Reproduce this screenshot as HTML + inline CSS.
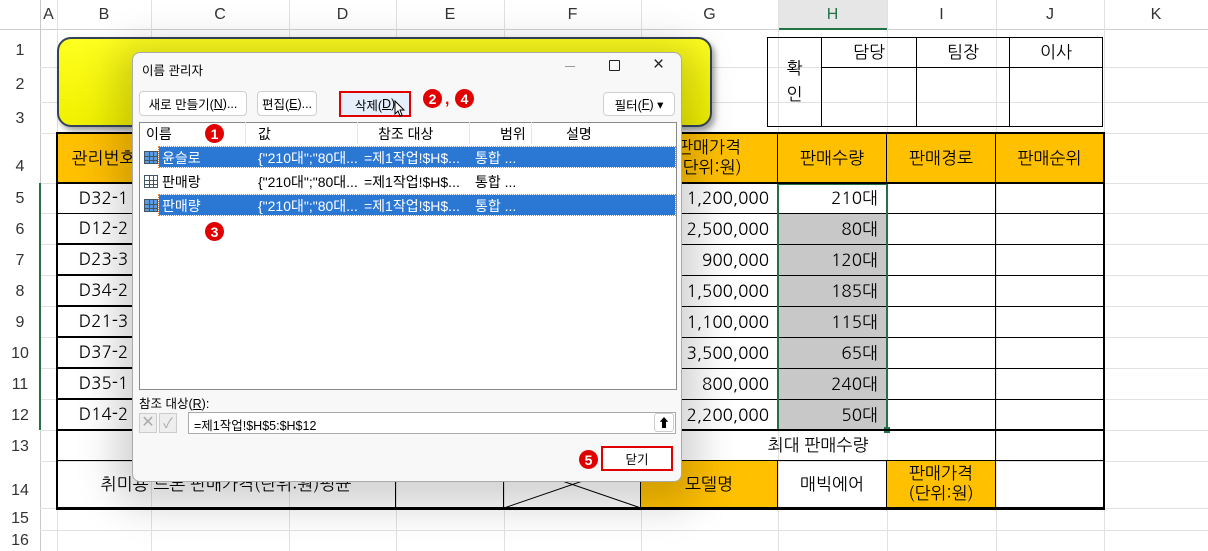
<!DOCTYPE html>
<html><head><meta charset="utf-8"><style>
*{margin:0;padding:0;box-sizing:border-box}
body{width:1208px;height:551px;overflow:hidden;background:#fff;position:relative;font-family:"Liberation Sans","Noto Sans CJK KR","NanumGothic",sans-serif;color:#000}
.a{position:absolute}
.hd{position:absolute;background:#fff;color:#333;font-size:16px;text-align:center}
.gl{position:absolute;background:#e1e1e1}
.c{position:absolute;display:flex;align-items:center;justify-content:center;font-size:17px;font-family:"NanumGothic","Noto Sans CJK KR",sans-serif;border:1px solid #000;margin:-1px 0 0 -1px}
.o{background:#FFC000}
.r{justify-content:flex-end;padding-right:8px}
.dl{font-size:12.5px;color:#000}
.btn{position:absolute;border:1px solid #d0d0d0;border-radius:4px;background:#fff;font-size:12.5px;display:flex;align-items:center;justify-content:center}
.red{position:absolute;width:19px;height:19px;border-radius:50%;background:#e00000;color:#fff;font-weight:bold;font-size:14px;display:flex;align-items:center;justify-content:center}
.sel{background:#2b78d4;color:#fff;outline:1px dotted #e08030}
.ico{position:absolute;width:14px;height:13px;border:1px solid #456;background:linear-gradient(#456 0 0) 0 4px/100% 1px no-repeat,linear-gradient(#456 0 0) 0 8px/100% 1px no-repeat,linear-gradient(90deg,#456 0 0) 4px 0/1px 100% no-repeat,linear-gradient(90deg,#456 0 0) 8px 0/1px 100% no-repeat,#fff}
.ico.b{background-color:#5a9be0}
</style></head><body>
<div class="a" style="left:0;top:0;width:1208px;height:30px;background:#fff;border-bottom:1px solid #d0d0d0"></div>
<div class="a" style="left:778px;top:0;width:109px;height:30px;background:#e6e6e6;border-bottom:2px solid #217346"></div>
<div class="hd" style="left:40px;top:6px;width:17px">A</div>
<div class="hd" style="left:57px;top:6px;width:94px">B</div>
<div class="hd" style="left:151px;top:6px;width:138px">C</div>
<div class="hd" style="left:289px;top:6px;width:107px">D</div>
<div class="hd" style="left:396px;top:6px;width:108px">E</div>
<div class="hd" style="left:504px;top:6px;width:137px">F</div>
<div class="hd" style="left:641px;top:6px;width:137px">G</div>
<div class="a" style="left:778px;top:6px;width:109px;text-align:center;font-size:16px;color:#217346">H</div>
<div class="hd" style="left:887px;top:6px;width:109px">I</div>
<div class="hd" style="left:996px;top:6px;width:108px">J</div>
<div class="hd" style="left:1104px;top:6px;width:104px">K</div>
<div class="gl" style="left:40px;top:0;width:1px;height:551px;background:#c8c8c8"></div>
<div class="gl" style="left:57px;top:0;width:1px;height:551px"></div>
<div class="gl" style="left:151px;top:0;width:1px;height:551px"></div>
<div class="gl" style="left:289px;top:0;width:1px;height:551px"></div>
<div class="gl" style="left:396px;top:0;width:1px;height:551px"></div>
<div class="gl" style="left:504px;top:0;width:1px;height:551px"></div>
<div class="gl" style="left:641px;top:0;width:1px;height:551px"></div>
<div class="gl" style="left:778px;top:0;width:1px;height:551px"></div>
<div class="gl" style="left:887px;top:0;width:1px;height:551px"></div>
<div class="gl" style="left:996px;top:0;width:1px;height:551px"></div>
<div class="gl" style="left:1104px;top:0;width:1px;height:551px"></div>
<div class="gl" style="left:0;top:67px;width:1208px;height:1px"></div>
<div class="gl" style="left:0;top:102px;width:1208px;height:1px"></div>
<div class="gl" style="left:0;top:133px;width:1208px;height:1px"></div>
<div class="gl" style="left:0;top:183px;width:1208px;height:1px"></div>
<div class="gl" style="left:0;top:213px;width:1208px;height:1px"></div>
<div class="gl" style="left:0;top:244px;width:1208px;height:1px"></div>
<div class="gl" style="left:0;top:275px;width:1208px;height:1px"></div>
<div class="gl" style="left:0;top:306px;width:1208px;height:1px"></div>
<div class="gl" style="left:0;top:337px;width:1208px;height:1px"></div>
<div class="gl" style="left:0;top:368px;width:1208px;height:1px"></div>
<div class="gl" style="left:0;top:399px;width:1208px;height:1px"></div>
<div class="gl" style="left:0;top:430px;width:1208px;height:1px"></div>
<div class="gl" style="left:0;top:461px;width:1208px;height:1px"></div>
<div class="gl" style="left:0;top:508px;width:1208px;height:1px"></div>
<div class="gl" style="left:0;top:530px;width:1208px;height:1px"></div>
<div class="a" style="left:0;top:30px;width:40px;height:521px;background:#fff;font-size:16px;color:#333;text-align:center">
<div class="a" style="left:0;top:12px;width:40px">1</div>
<div class="a" style="left:0;top:46px;width:40px">2</div>
<div class="a" style="left:0;top:80px;width:40px">3</div>
<div class="a" style="left:0;top:128px;width:40px">4</div>
<div class="a" style="left:0;top:160px;width:40px">5</div>
<div class="a" style="left:0;top:191px;width:40px">6</div>
<div class="a" style="left:0;top:222px;width:40px">7</div>
<div class="a" style="left:0;top:253px;width:40px">8</div>
<div class="a" style="left:0;top:284px;width:40px">9</div>
<div class="a" style="left:0;top:315px;width:40px">10</div>
<div class="a" style="left:0;top:346px;width:40px">11</div>
<div class="a" style="left:0;top:377px;width:40px">12</div>
<div class="a" style="left:0;top:408px;width:40px">13</div>
<div class="a" style="left:0;top:452px;width:40px">14</div>
<div class="a" style="left:0;top:480px;width:40px">15</div>
<div class="a" style="left:0;top:502px;width:40px">16</div>
</div>
<div class="a" style="left:39px;top:183px;width:2px;height:247px;background:#217346"></div>

<div class="a" style="left:57px;top:37px;width:655px;height:90px;background:linear-gradient(#ffff20,#f0f000);border:2px solid #33445a;border-radius:14px;box-shadow:3px 4px 6px rgba(0,0,0,.35)"></div>

<div class="c" style="left:768px;top:38px;width:55px;height:90px;flex-direction:column;line-height:26px">확<br>인</div>
<div class="c" style="left:822px;top:38px;width:96px;height:31px">담당</div>
<div class="c" style="left:917px;top:38px;width:94px;height:31px">팀장</div>
<div class="c" style="left:1010px;top:38px;width:94px;height:31px">이사</div>
<div class="c" style="left:822px;top:68px;width:96px;height:60px"></div>
<div class="c" style="left:917px;top:68px;width:94px;height:60px"></div>
<div class="c" style="left:1010px;top:68px;width:94px;height:60px"></div>

<div class="c o" style="left:57px;top:134px;width:95px;height:50px">관리번호</div>
<div class="c o" style="left:641px;top:134px;width:138px;height:50px;line-height:20px;text-align:center">판매가격<br>(단위:원)</div>
<div class="c o" style="left:778px;top:134px;width:110px;height:50px">판매수량</div>
<div class="c o" style="left:887px;top:134px;width:110px;height:50px">판매경로</div>
<div class="c o" style="left:996px;top:134px;width:109px;height:50px">판매순위</div>

<div class="c" style="left:57px;top:184px;width:95px;height:31px">D32-1</div>
<div class="c" style="left:57px;top:214px;width:95px;height:31px">D12-2</div>
<div class="c" style="left:57px;top:245px;width:95px;height:31px">D23-3</div>
<div class="c" style="left:57px;top:276px;width:95px;height:31px">D34-2</div>
<div class="c" style="left:57px;top:307px;width:95px;height:31px">D21-3</div>
<div class="c" style="left:57px;top:338px;width:95px;height:31px">D37-2</div>
<div class="c" style="left:57px;top:369px;width:95px;height:31px">D35-1</div>
<div class="c" style="left:57px;top:400px;width:95px;height:31px">D14-2</div>

<div class="c r" style="left:641px;top:184px;width:138px;height:31px">1,200,000</div>
<div class="c r" style="left:641px;top:214px;width:138px;height:32px">2,500,000</div>
<div class="c r" style="left:641px;top:245px;width:138px;height:32px">900,000</div>
<div class="c r" style="left:641px;top:276px;width:138px;height:32px">1,500,000</div>
<div class="c r" style="left:641px;top:307px;width:138px;height:32px">1,100,000</div>
<div class="c r" style="left:641px;top:338px;width:138px;height:32px">3,500,000</div>
<div class="c r" style="left:641px;top:369px;width:138px;height:32px">800,000</div>
<div class="c r" style="left:641px;top:400px;width:138px;height:32px">2,200,000</div>

<div class="c r" style="left:778px;top:184px;width:110px;height:31px">210대</div>
<div class="c r" style="left:778px;top:214px;width:110px;height:32px;background:#c8c8c8">80대</div>
<div class="c r" style="left:778px;top:245px;width:110px;height:32px;background:#c8c8c8">120대</div>
<div class="c r" style="left:778px;top:276px;width:110px;height:32px;background:#c8c8c8">185대</div>
<div class="c r" style="left:778px;top:307px;width:110px;height:32px;background:#c8c8c8">115대</div>
<div class="c r" style="left:778px;top:338px;width:110px;height:32px;background:#c8c8c8">65대</div>
<div class="c r" style="left:778px;top:369px;width:110px;height:32px;background:#c8c8c8">240대</div>
<div class="c r" style="left:778px;top:400px;width:110px;height:32px;background:#c8c8c8">50대</div>

<div class="c" style="left:887px;top:184px;width:110px;height:31px"></div>
<div class="c" style="left:887px;top:214px;width:110px;height:32px"></div>
<div class="c" style="left:887px;top:245px;width:110px;height:32px"></div>
<div class="c" style="left:887px;top:276px;width:110px;height:32px"></div>
<div class="c" style="left:887px;top:307px;width:110px;height:32px"></div>
<div class="c" style="left:887px;top:338px;width:110px;height:32px"></div>
<div class="c" style="left:887px;top:369px;width:110px;height:32px"></div>
<div class="c" style="left:887px;top:400px;width:110px;height:32px"></div>
<div class="c" style="left:996px;top:184px;width:109px;height:31px"></div>
<div class="c" style="left:996px;top:214px;width:109px;height:32px"></div>
<div class="c" style="left:996px;top:245px;width:109px;height:32px"></div>
<div class="c" style="left:996px;top:276px;width:109px;height:32px"></div>
<div class="c" style="left:996px;top:307px;width:109px;height:32px"></div>
<div class="c" style="left:996px;top:338px;width:109px;height:32px"></div>
<div class="c" style="left:996px;top:369px;width:109px;height:32px"></div>
<div class="c" style="left:996px;top:400px;width:109px;height:32px"></div>
<div class="a" style="left:777px;top:183px;width:111px;height:248px;border:2px solid #217346"></div>
<div class="a" style="left:884px;top:427px;width:6px;height:6px;background:#217346"></div>

<div class="c" style="left:57px;top:431px;width:585px;height:31px"></div>
<div class="c" style="left:641px;top:431px;width:356px;height:31px">최대 판매수량</div>
<div class="c" style="left:996px;top:431px;width:109px;height:31px"></div>
<div class="c" style="left:57px;top:461px;width:340px;height:48px">취미용 드론 판매가격(단위:원)평균</div>
<div class="c" style="left:396px;top:461px;width:109px;height:48px"></div>
<div class="c" style="left:504px;top:461px;width:138px;height:48px"><svg width="137" height="47" style="position:absolute;left:0;top:0"><line x1="0" y1="47" x2="137" y2="0" stroke="#000"/><line x1="0" y1="0" x2="137" y2="47" stroke="#000"/></svg></div>
<div class="c o" style="left:641px;top:461px;width:138px;height:48px">모델명</div>
<div class="c" style="left:778px;top:461px;width:110px;height:48px">매빅에어</div>
<div class="c o" style="left:887px;top:461px;width:110px;height:48px;line-height:20px;text-align:center">판매가격<br>(단위:원)</div>
<div class="c" style="left:996px;top:461px;width:109px;height:48px"></div>
<div class="a" style="left:56px;top:132px;width:1049px;height:378px;border:2px solid #000"></div>
<div class="a" style="left:56px;top:182px;width:1049px;height:2px;background:#000"></div>
<div class="a" style="left:56px;top:429px;width:1049px;height:2px;background:#000"></div>

<div class="a" style="left:132px;top:52px;width:550px;height:430px;background:#f8f8f8;border:1px solid #aaa;border-radius:8px;box-shadow:0 8px 40px 16px rgba(0,0,0,.18)">
<div class="a dl" style="left:9px;top:7px">이름 관리자</div>
<div class="a" style="left:432px;top:13px;width:10px;height:1px;background:#999"></div>
<div class="a" style="left:476px;top:7px;width:11px;height:11px;border:1.5px solid #222;border-radius:1px"></div>
<div class="a" style="left:520px;top:1px;font-size:19px;color:#222">×</div>
<div class="btn" style="left:6px;top:38px;width:108px;height:25px">새로 만들기(<u>N</u>)...</div>
<div class="btn" style="left:124px;top:38px;width:60px;height:25px">편집(<u>E</u>)...</div>
<div class="btn" style="left:206px;top:38px;width:72px;height:26px;background:#e5effb;border:2px solid #e00000;border-radius:0">삭제(<u>D</u>)</div>
<svg class="a" style="left:261px;top:47px" width="12" height="18"><path d="M1 1 L1 14 L4 11 L6 16 L8 15 L6 10 L10 10 Z" fill="#fff" stroke="#000" stroke-width="1"/></svg>
<div class="red" style="left:290px;top:36px">2</div>
<div class="a" style="left:312px;top:38px;font-size:16px;font-weight:bold;color:#e00000">,</div>
<div class="red" style="left:322px;top:36px">4</div>
<div class="btn" style="left:470px;top:39px;width:72px;height:24px">필터(<u>F</u>) ▾</div>
<div class="a" style="left:6px;top:69px;width:538px;height:268px;background:#fff;border:1px solid #8a8a8a"></div>
</div>
<div class="a dl" style="left:146px;top:124px;font-size:14px">이름</div>
<div class="a dl" style="left:258px;top:124px;font-size:14px">값</div>
<div class="a dl" style="left:378px;top:124px;font-size:14px">참조 대상</div>
<div class="a dl" style="left:500px;top:124px;font-size:14px">범위</div>
<div class="a dl" style="left:566px;top:124px;font-size:14px">설명</div>
<div class="a" style="left:245px;top:122px;width:1px;height:22px;background:#e5e5e5"></div>
<div class="a" style="left:357px;top:122px;width:1px;height:22px;background:#e5e5e5"></div>
<div class="a" style="left:469px;top:122px;width:1px;height:22px;background:#e5e5e5"></div>
<div class="a" style="left:531px;top:122px;width:1px;height:22px;background:#e5e5e5"></div>
<div class="red" style="left:205px;top:124px">1</div>

<div class="a sel" style="left:159px;top:147px;width:516px;height:20px"></div>
<div class="a sel" style="left:159px;top:195px;width:516px;height:20px"></div>
<div class="ico b" style="left:144px;top:151px"></div>
<div class="ico" style="left:144px;top:175px"></div>
<div class="ico b" style="left:144px;top:199px"></div>
<div class="a" style="left:162px;top:148px;font-size:14px;color:#fff">윤슬로</div>
<div class="a" style="left:258px;top:148px;font-size:14px;color:#fff">{"210대";"80대...</div>
<div class="a" style="left:364px;top:148px;font-size:14px;color:#fff">=제1작업!$H$...</div>
<div class="a" style="left:475px;top:148px;font-size:14px;color:#fff">통합 ...</div>
<div class="a" style="left:162px;top:172px;font-size:14px">판매랑</div>
<div class="a" style="left:258px;top:172px;font-size:14px">{"210대";"80대...</div>
<div class="a" style="left:364px;top:172px;font-size:14px">=제1작업!$H$...</div>
<div class="a" style="left:475px;top:172px;font-size:14px">통합 ...</div>
<div class="a" style="left:162px;top:196px;font-size:14px;color:#fff">판매량</div>
<div class="a" style="left:258px;top:196px;font-size:14px;color:#fff">{"210대";"80대...</div>
<div class="a" style="left:364px;top:196px;font-size:14px;color:#fff">=제1작업!$H$...</div>
<div class="a" style="left:475px;top:196px;font-size:14px;color:#fff">통합 ...</div>
<div class="red" style="left:205px;top:222px">3</div>

<div class="a dl" style="left:139px;top:393px">참조 대상(<u>R</u>):</div>
<div class="a" style="left:139px;top:413px;width:18px;height:20px;border:1px solid #ccc;background:#eee;color:#aaa;font-size:16px;text-align:center;line-height:18px">✕</div>
<div class="a" style="left:159px;top:413px;width:18px;height:20px;border:1px solid #ccc;background:#eee;color:#aaa;font-size:14px;text-align:center;line-height:18px">✓</div>
<div class="a" style="left:188px;top:412px;width:488px;height:22px;background:#fff;border:1px solid #aaa;font-size:12.5px;padding:2px 5px">=제1작업!$H$5:$H$12</div>
<div class="a" style="left:654px;top:413px;width:20px;height:19px;border:1px solid #ccc;border-radius:3px;background:#fff;font-size:12px;text-align:center;font-weight:bold">⬆</div>
<div class="red" style="left:579px;top:450px">5</div>
<div class="btn" style="left:601px;top:446px;width:72px;height:25px;border:2px solid #e00000;border-radius:0">닫기</div>
</body></html>
